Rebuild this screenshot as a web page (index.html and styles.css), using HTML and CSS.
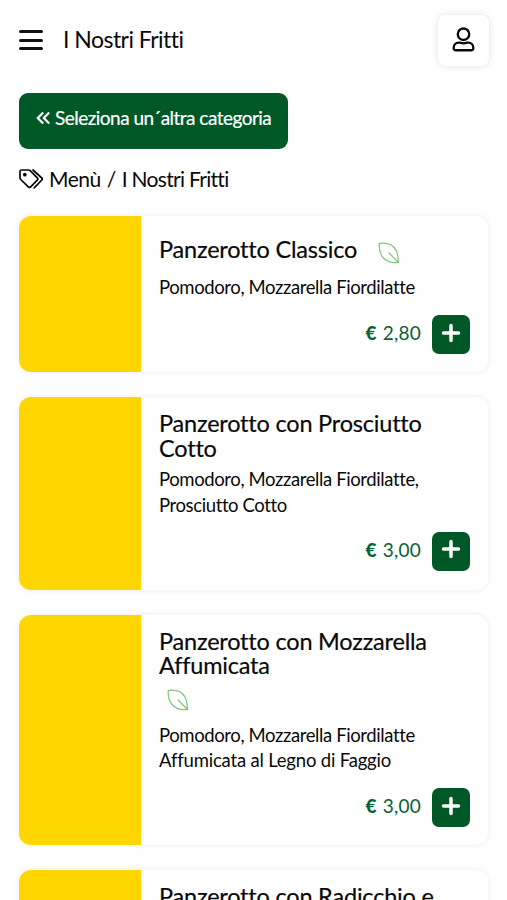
FILE: index.html
```html
<!DOCTYPE html>
<html lang="it">
<head>
<meta charset="utf-8">
<title>I Nostri Fritti</title>
<link rel="stylesheet" href="styles.css">
</head>
<body>
<svg class="defs" aria-hidden="true">
  <symbol id="leaf" viewBox="0 0 22 22"><path d="M1.3 1.500C9.500 .3 15 3 18 8C20 11.500 20 16 20.500 20.500C14 21.300 8.500 19.500 5 15.500C1.500 11.500 1 6.500 1.300 1.500ZM11 11L20.300 20.300"/></symbol>
  <symbol id="plus" viewBox="0 0 20 20"><path d="M10 2.500V17.500M2.500 10H17.500"/></symbol>
</svg>
<header class="topbar">
  <button class="menu" aria-label="Menu"><span></span><span></span><span></span></button>
  <h1>I Nostri Fritti</h1>
  <button class="account" aria-label="Account">
    <svg viewBox="0 0 24 26"><circle cx="12" cy="7.500" r="6"/><path d="M7 16.300H8.500Q12 17.600 15.500 16.300H17C20 16.300 22.200 18.500 22.200 21.500V22.500Q22.200 24.200 20.500 24.200H3.500Q1.800 24.200 1.800 22.500V21.500C1.800 18.500 4 16.300 7 16.300Z"/></svg>
  </button>
</header>
<main>
  <a class="back"><svg viewBox="0 0 14 12"><path d="M6.500 1.200L1.700 6L6.500 10.800M12.500 1.200L7.700 6L12.500 10.800"/></svg><span>Seleziona un´altra categoria</span></a>
  <nav class="crumbs">
    <svg viewBox="0 0 26 20"><path d="M1 2.500Q1 1 2.500 1H9.500Q10.500 1 11.200 1.700L18.300 8.800Q19.500 10 18.300 11.200L11.700 17.800Q10.500 19 9.300 17.800L1.700 10.500Q1 9.800 1 8.800ZM14 1L22.800 9Q23.900 10 22.800 11L15.200 18.800"/><circle cx="5.800" cy="5.700" r="1"/></svg>
    <span>Menù</span><span class="slash">/</span><span class="current">I Nostri Fritti</span>
  </nav>
  <article class="card">
    <div class="photo"></div>
    <div class="body">
      <div class="heading single"><h2>Panzerotto Classico</h2><svg class="leaf"><use href="#leaf"/></svg></div>
      <p>Pomodoro, Mozzarella Fiordilatte</p>
      <div class="buy"><span class="price"><b>€</b> 2,80</span><button class="add" aria-label="Aggiungi"><svg viewBox="0 0 20 20"><use href="#plus"/></svg></button></div>
    </div>
  </article>
  <article class="card medium">
    <div class="photo"></div>
    <div class="body">
      <div class="heading"><h2>Panzerotto con Prosciutto<br>Cotto</h2></div>
      <p>Pomodoro, Mozzarella Fiordilatte,<br>Prosciutto Cotto</p>
      <div class="buy"><span class="price"><b>€</b> 3,00</span><button class="add" aria-label="Aggiungi"><svg viewBox="0 0 20 20"><use href="#plus"/></svg></button></div>
    </div>
  </article>
  <article class="card tall">
    <div class="photo"></div>
    <div class="body">
      <div class="heading"><h2>Panzerotto con Mozzarella<br>Affumicata</h2><svg class="leaf"><use href="#leaf"/></svg></div>
      <p>Pomodoro, Mozzarella Fiordilatte<br><span class="loose">Affumicata al Legno di Faggio</span></p>
      <div class="buy"><span class="price"><b>€</b> 3,00</span><button class="add" aria-label="Aggiungi"><svg viewBox="0 0 20 20"><use href="#plus"/></svg></button></div>
    </div>
  </article>
  <article class="card medium">
    <div class="photo"></div>
    <div class="body"><div class="heading"><h2>Panzerotto con Radicchio e</h2></div></div>
  </article>
</main>
</body>
</html>
```
FILE: styles.css
```css
* { box-sizing: border-box; }
html { height: 900px; overflow: hidden; }
body { margin: 0; height: 900px; overflow: hidden; background: #fff; color: #090909; font-family: Lato, "Liberation Sans", sans-serif; }
h1, h2, p { margin: 0; font-weight: 400; }
button { border: 0; padding: 0; }
svg { display: block; fill: none; stroke: currentColor; stroke-linecap: round; stroke-linejoin: round; }
.defs { display: none; }
.topbar { display: flex; align-items: center; height: 80px; padding: 0 18px 0 19px; }
.menu { display: flex; flex-direction: column; justify-content: space-between; width: 24px; height: 20px; background: none; }
.menu span { height: 3px; border-radius: 2px; background: #111; }
h1 { margin: 0 0 3px 20px; font-size: 23px; line-height: 28px; letter-spacing: -.53px; }
.account { display: flex; align-items: center; justify-content: center; width: 51px; height: 51px; margin-left: auto; border-radius: 8px; background: #fff; box-shadow: 0 0 7px rgba(0,0,0,.12); color: #090909; }
.account svg { width: 23px; height: 25px; stroke-width: 2.4; margin-top: -2px; }
main { padding: 13px 19px 0; }
.back { display: flex; width: 269px; height: 56px; padding: 13px 0 0 17px; gap: 5px; border-radius: 9px; background: #005826; color: #fff; font-size: 19px; line-height: 24px; letter-spacing: -.52px; white-space: nowrap; -webkit-text-stroke: .2px; }
.back svg { width: 14px; height: 12px; margin-top: 6px; stroke-width: 2.3; }
.crumbs { display: flex; align-items: center; height: 28px; margin: 15px 0 24px; font-size: 21px; letter-spacing: -.5px; white-space: nowrap; }
.crumbs svg { width: 26px; height: 20px; margin: 2px 4px 0 0; stroke-width: 1.7; }
.crumbs circle { fill: currentColor; }
.slash { margin: 0 7px 0 6px; }
.current { margin-left: -1px; letter-spacing: -.7px; }
.card { display: flex; height: 156px; margin-bottom: 25px; border-radius: 12px; overflow: hidden; background: #fff; box-shadow: 0 0 6px rgba(0,0,0,.08); }
.medium { height: 192.500px; }
.tall { height: 230.500px; }
.photo { flex: none; width: 122px; background: #ffd600; }
.body { display: flex; flex: 1; flex-direction: column; padding: 14px 18px 18px; }
.medium .body { padding-bottom: 19px; }
.heading h2 { font-size: 23.500px; line-height: 24.500px; letter-spacing: -.2px; white-space: nowrap; -webkit-text-stroke: .2px; }
.heading .leaf { width: 22px; height: 22px; margin: 11px 0 5px 8px; color: #82c782; stroke-width: 1.3; }
.single { display: flex; margin-top: 7px; height: 31px; }
.single .leaf { margin: 5px 0 0 21px; }
.body p { margin-top: 7px; font-size: 18.500px; line-height: 25.500px; letter-spacing: -.39px; white-space: nowrap; }
.loose { letter-spacing: -.19px; }
.buy { display: flex; align-items: center; justify-content: flex-end; gap: 11px; margin-top: auto; }
.price { margin-bottom: 4px; color: #086334; font-size: 19px; letter-spacing: .2px; }
.price b { display: inline-block; margin-right: 1px; font-weight: 900; }
.add { display: grid; place-items: center; width: 38px; height: 39px; border-radius: 7px; background: #005826; color: #fff; }
.add svg { width: 20px; height: 20px; margin-bottom: 4px; stroke-width: 3.500; }
```
